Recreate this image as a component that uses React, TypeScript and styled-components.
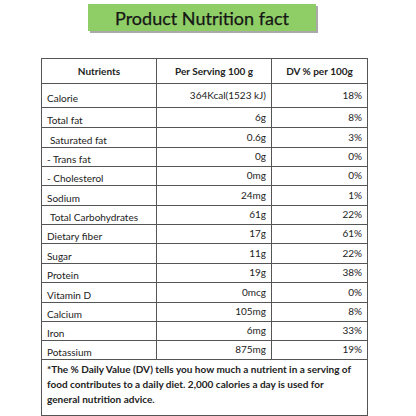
import React from "react";
import styled, { createGlobalStyle } from "styled-components";

const Global = createGlobalStyle`
  html, body { margin: 0; padding: 0; background: #fff; }
  body { font-family: Lato, "Open Sans", sans-serif; color: #222; }
`;

const Page = styled.div`
  width: 416px;
  height: 416px;
  display: flex;
  flex-direction: column;
  align-items: flex-start;
`;

const TitleBar = styled.div`
  margin: 4px 0 0 88px;
  width: 228px;
  height: 28px;
  background: #8fce66;
  box-shadow: 2px 2px 0 #a9a9a9;
  display: flex;
  align-items: center;
  justify-content: center;
  font-size: 18px;
  color: #161616;
  -webkit-text-stroke: 0.25px #161616;
`;

const Table = styled.table`
  margin: 27px 0 0 41px;
  width: 326px;
  border-collapse: collapse;
  table-layout: fixed;
  font-size: 10px;
  color: #222;
`;

const HeadCell = styled.th`
  border: 1px solid #555;
  height: 24px;
  padding: 0;
  font-weight: 700;
  font-size: 10px;
  text-align: center;
  vertical-align: middle;
`;

const LabelCell = styled.td<{ $indent?: boolean; $h: number }>`
  border: 1px solid #555;
  height: ${(p) => p.$h}px;
  padding: 4px 0 0 ${(p) => (p.$indent ? 8 : 5)}px;
  vertical-align: middle;
  line-height: 1;
  box-sizing: border-box;
`;

const ValueCell = styled.td<{ $h: number }>`
  border: 1px solid #555;
  height: ${(p) => p.$h}px;
  padding: 0 5px 2px 0;
  text-align: right;
  vertical-align: middle;
  line-height: 1;
  box-sizing: border-box;
`;

const NoteCell = styled.td`
  border: 1px solid #555;
  height: 48px;
  padding: 2px 5px 8px 5px;
  font-weight: 700;
  font-size: 10px;
  line-height: 15px;
  vertical-align: top;
  box-sizing: border-box;
`;

type Row = { label: string; per: string; dv: string; h: number; indent?: boolean };

const rows: Row[] = [
  { label: "Calorie", per: "364Kcal(1523 kJ)", dv: "18%", h: 24 },
  { label: "Total fat", per: "6g", dv: "8%", h: 20 },
  { label: "Saturated fat", per: "0.6g", dv: "3%", h: 20, indent: true },
  { label: "- Trans fat", per: "0g", dv: "0%", h: 19 },
  { label: "- Cholesterol", per: "0mg", dv: "0%", h: 19 },
  { label: "Sodium", per: "24mg", dv: "1%", h: 20 },
  { label: "Total Carbohydrates", per: "61g", dv: "22%", h: 19, indent: true },
  { label: "Dietary fiber", per: "17g", dv: "61%", h: 19 },
  { label: "Sugar", per: "11g", dv: "22%", h: 20 },
  { label: "Protein", per: "19g", dv: "38%", h: 19 },
  { label: "Vitamin D", per: "0mcg", dv: "0%", h: 20 },
  { label: "Calcium", per: "105mg", dv: "8%", h: 19 },
  { label: "Iron", per: "6mg", dv: "33%", h: 19 },
  { label: "Potassium", per: "875mg", dv: "19%", h: 19 },
];

export default function App() {
  return (
    <Page>
      <Global />
      <TitleBar>Product Nutrition fact</TitleBar>
      <Table>
        <colgroup>
          <col style={{ width: 115 }} />
          <col style={{ width: 115 }} />
          <col style={{ width: 96 }} />
        </colgroup>
        <thead>
          <tr>
            <HeadCell>Nutrients</HeadCell>
            <HeadCell>Per Serving 100 g</HeadCell>
            <HeadCell>DV % per 100g</HeadCell>
          </tr>
        </thead>
        <tbody>
          {rows.map((r) => (
            <tr key={r.label}>
              <LabelCell $h={r.h} $indent={r.indent}>{r.label}</LabelCell>
              <ValueCell $h={r.h}>{r.per}</ValueCell>
              <ValueCell $h={r.h}>{r.dv}</ValueCell>
            </tr>
          ))}
          <tr>
            <NoteCell colSpan={3}>
              *The % Daily Value (DV) tells you how much a nutrient in a serving of
              <br />
              food contributes to a daily diet. 2,000 calories a day is used for
              <br />
              general nutrition advice.
            </NoteCell>
          </tr>
        </tbody>
      </Table>
    </Page>
  );
}
